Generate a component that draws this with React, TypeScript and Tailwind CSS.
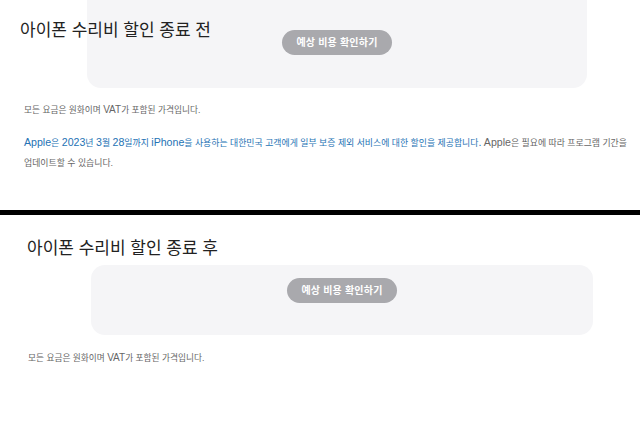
import React from 'react';

const Latin = ({ children, big }: { children: React.ReactNode; big?: boolean }) => (
  <span className={big ? 'text-[10.6px]' : 'text-[10px]'}>{children}</span>
);

function EstimateButton() {
  return (
    <button className="w-[110px] h-[25px] rounded-full bg-[#a9a9ad] text-white text-[10px] font-bold tracking-[0.2px]">
      예상 비용 확인하기
    </button>
  );
}

export default function App() {
  return (
    <div className="w-[640px] h-[426px] bg-white overflow-hidden font-['Liberation_Sans','Noto_Sans_CJK_KR',sans-serif]">
      {/* 종료 전 */}
      <section className="relative h-[210px]">
        <div className="ml-[87px] w-[500px] h-[88px] bg-[#f5f5f7] rounded-b-[14px] flex justify-center pt-[30px]">
          <EstimateButton />
        </div>
        <h2 className="absolute left-[20px] top-[19px] text-[17px] leading-[24px] text-[#222] font-normal">
          아이폰 수리비 할인 종료 전
        </h2>
        <p className="ml-[24px] mt-[16px] text-[8.7px] leading-[12px] text-[#666]">
          모든 요금은 원화이며 <Latin>VAT</Latin>가 포함된 가격입니다.
        </p>
        <p className="ml-[24px] mt-[16px] text-[8.9px] leading-[20px] text-[#666] w-[612px] break-keep">
          <span className="text-[#2472b4]">
            <Latin big>Apple</Latin>은 <Latin big>2023</Latin>년 <Latin big>3</Latin>월 <Latin big>28</Latin>일까지{' '}
            <Latin big>iPhone</Latin>을 사용하는 대한민국 고객에게 일부 보증 제외 서비스에 대한 할인을 제공합니다<Latin big>.</Latin>
          </span>{' '}
          <Latin big>Apple</Latin>은 필요에 따라 프로그램 기간을 업데이트할 수 있습니다.
        </p>
      </section>

      <div className="h-[5px] bg-black" />

      {/* 종료 후 */}
      <section className="pt-[22px]">
        <h2 className="ml-[27px] text-[17px] leading-[24px] text-[#222] font-normal">
          아이폰 수리비 할인 종료 후
        </h2>
        <div className="ml-[91px] mt-[4px] w-[502px] h-[70px] bg-[#f5f5f7] rounded-[14px] flex justify-center pt-[13px]">
          <EstimateButton />
        </div>
        <p className="ml-[28px] mt-[17px] text-[8.7px] leading-[12px] text-[#666]">
          모든 요금은 원화이며 <Latin>VAT</Latin>가 포함된 가격입니다.
        </p>
      </section>
    </div>
  );
}
